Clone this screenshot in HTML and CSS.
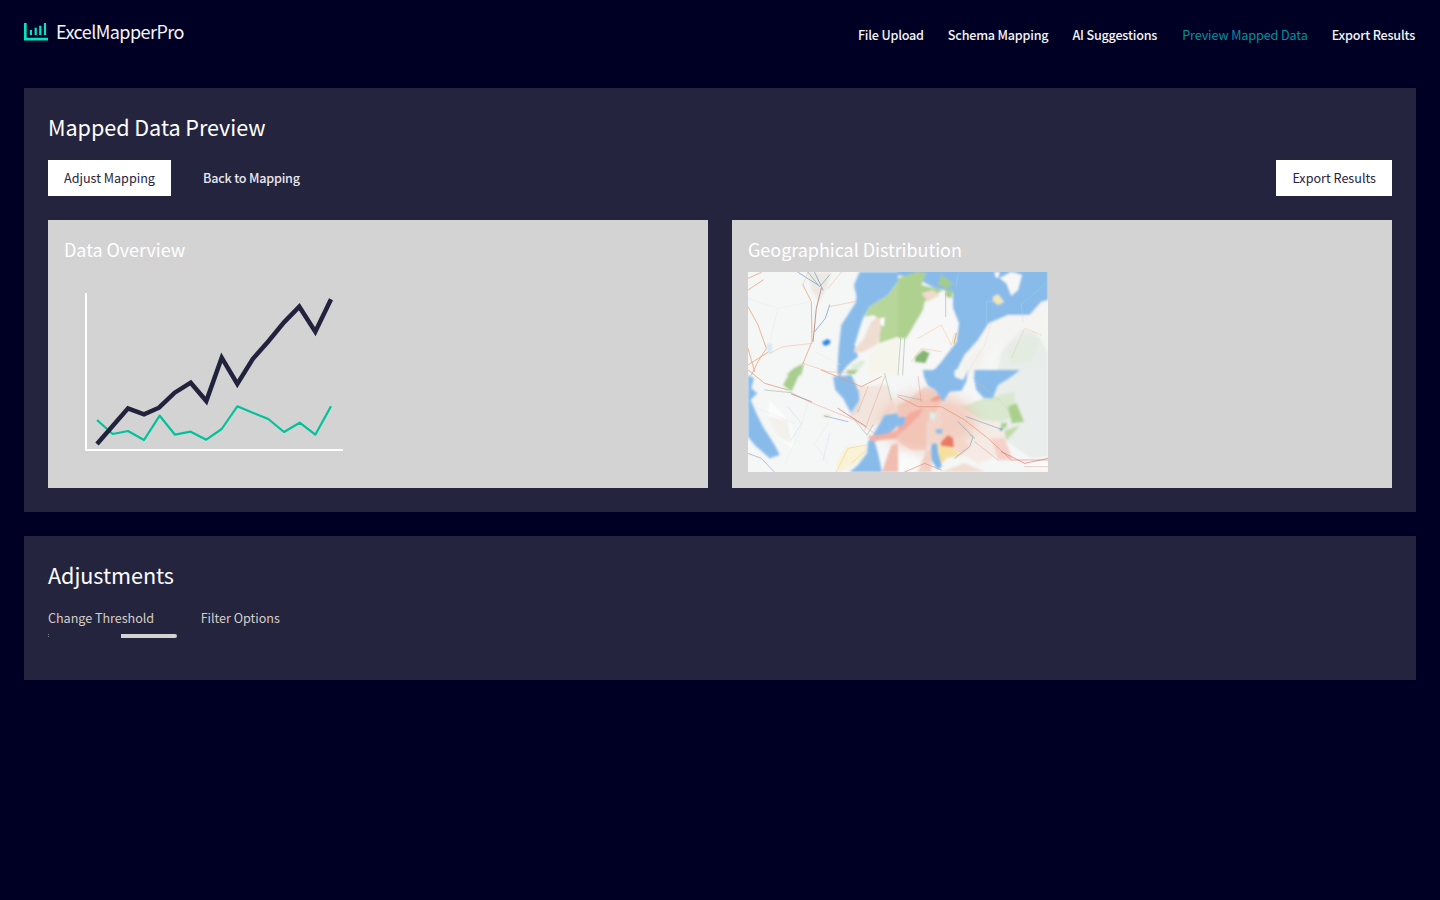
FILE: index.html
```html
<!DOCTYPE html>
<html lang="en">
<head>
<meta charset="utf-8">
<title>ExcelMapperPro</title>
<link rel="stylesheet" href="styles.css">
</head>
<body>
<header class="topbar">
  <a class="brand">
    <svg class="brand-icon" width="24" height="18" viewBox="0 0 24 18" aria-hidden="true">
      <path d="M1.250 0V16.200H24" fill="none" stroke="#00e5c4" stroke-width="2.800"/>
      <path d="M6.900 7v5M11.700 4.700v7.300M16.300 2.700v9.300M21 0v12" fill="none" stroke="#00e5c4" stroke-width="2.200"/>
    </svg>
    <span class="brand-name">ExcelMapperPro</span>
  </a>
  <nav class="nav">
    <a class="nav-link">File Upload</a>
    <a class="nav-link">Schema Mapping</a>
    <a class="nav-link">AI Suggestions</a>
    <a class="nav-link nav-active">Preview Mapped Data</a>
    <a class="nav-link">Export Results</a>
  </nav>
</header>
<main class="content">
  <section class="panel">
    <h2 class="panel-title">Mapped Data Preview</h2>
    <div class="toolbar">
      <button class="btn btn-white">Adjust Mapping</button>
      <button class="btn btn-text">Back to Mapping</button>
      <button class="btn btn-white btn-end">Export Results</button>
    </div>
    <div class="cards">
      <article class="card">
        <h3 class="card-title">Data Overview</h3>
        <svg class="figure" width="300" height="200" viewBox="64 272 300 200" aria-hidden="true">
          <defs>
            <filter id="raster" x="-5%" y="-5%" width="110%" height="110%"><feGaussianBlur stdDeviation="0.300"/></filter>
          </defs>
          <g filter="url(#raster)">
            <path d="M86 293V450H343" fill="none" stroke="#fff" stroke-width="2"/>
            <polyline fill="none" stroke="#00c29a" stroke-width="2.200" stroke-linejoin="round" points="97,420 112.700,434 128,431 144,440 159.700,415.700 175,434.700 190.700,431.700 206.300,439.700 221.700,429 237.300,406.300 252.700,412.700 268.300,419 284,432 299.700,422.700 315.300,434.700 331,406.300"/>
            <polyline fill="none" stroke="#24243e" stroke-width="4.500" points="97,444 128,408.300 144,414.300 159,407.700 174.700,392.700 190.700,382.700 206.300,401 221.700,357.700 237.300,384 252.700,359 268,341.700 284,322.300 299.300,306.700 315.300,331.700 331,299.300"/>
          </g>
        </svg>
      </article>
      <article class="card">
        <h3 class="card-title">Geographical Distribution</h3>
        <svg class="figure" width="300" height="200" viewBox="0 0 300 200" aria-hidden="true">
          <defs>
            <filter id="soft" x="-5%" y="-5%" width="110%" height="110%"><feGaussianBlur stdDeviation="0.900"/></filter>
            <filter id="softer" x="-5%" y="-5%" width="110%" height="110%"><feGaussianBlur stdDeviation="0.500"/></filter>
            <filter id="wash" x="-30%" y="-30%" width="160%" height="160%"><feGaussianBlur stdDeviation="6"/></filter>
            <clipPath id="mapclip"><rect width="300" height="200"/></clipPath>
          </defs>
          <g clip-path="url(#mapclip)">
          <rect width="300" height="200" fill="#f5f6f6"/>
          <g filter="url(#soft)">
            <g transform="translate(0,-7) scale(.33333)">
              <path fill="#89bbea" d="M335 20L450 20L450 50L420 90L365 125L345 160L335 190L320 240L330 275L300 300L280 325L275 340L268 320L272 250L280 180L322 115L326 95L318 60Z"/>
              <path fill="#f0ddd2" d="M395 150L370 170L345 225L320 250L318 262L345 262L385 240L402 200Z"/>
              <path fill="#b7d69a" d="M450 50L420 90L365 125L350 155L375 150L402 165L392 240L450 215Z"/>
              <path fill="#f6f5ec" d="M392 235L450 215L450 330L360 330L360 280Z"/>
              <path fill="#fff" d="M397 160L410 157L408 185L398 178Z"/>
              <path fill="#2a86e2" d="M222 232L238 222L248 228L244 238L230 243Z"/>
              <path fill="#d4e6f3" d="M55 238L72 236L72 256L62 268Z"/>
              <path fill="#dcecd8" d="M310 300L345 285L350 295L330 315L310 325Z"/>
              <path fill="#a8cd8f" d="M115 330L140 308L168 295L160 330Z"/>
              <path fill="#ebe3dc" opacity=".7" d="M180 22L250 22L235 70L215 110L190 75Z"/>
            </g>
            <g transform="translate(150,-7) scale(.33333)">
              <path fill="#89bbea" d="M0 0H450V110L420 130L395 150L330 150L270 180L240 230L200 270L170 330L95 330L130 285L175 230L183 175L165 130L165 80L110 70L75 50L0 30Z"/>
              <path fill="#f6f7f6" d="M0 50L65 60L110 85L142 80L160 125L180 175L175 230L130 290L95 330L0 330Z"/>
              <path fill="#aed18f" d="M0 40L30 30L60 20L85 25L70 60L110 70L135 75L80 110L75 135L25 220L0 220Z"/>
              <path fill="#a5cc88" d="M140 70L165 78L160 100L145 95Z"/>
              <path fill="#a5cc88" d="M130 30L145 40L165 58L145 68L120 60Z"/>
              <path fill="#f0dccc" d="M70 85L105 75L125 90L90 110Z"/>
              <path fill="#84b670" d="M52 275L75 255L95 265L82 295L50 290Z"/>
              <path fill="#f6f7f6" d="M305 40L340 20L372 30L360 75L340 92L325 55Z"/>
              <path fill="#f6f7f6" d="M290 20H305L302 38L292 36Z"/>
              <path fill="#f1e8b8" d="M285 95L300 88L318 110L300 120L285 108Z"/>
              <path fill="#f4f4f2" d="M170 330L200 270L240 225L272 175L330 150L395 150L430 110L450 105V330H390L345 320L295 328L285 300L310 235L290 240L265 295L270 330Z"/>
              <path fill="#e8ecea" d="M300 325L310 260L370 195L410 200L450 260V330H350Z"/>
              <path fill="#e2ece0" d="M330 260L380 210L430 220L400 290L340 300Z"/>
              <path fill="#f4f1ee" opacity=".8" d="M190 310L240 250L260 260L230 330H190Z"/>
            </g>
            <g transform="translate(0,98) scale(.33333)">
              <path fill="#89bbea" d="M255 20L310 15L335 70L335 125L312 135L285 85L262 60Z"/>
              <path fill="#89bbea" d="M0 15L18 25L10 55L28 70L8 90L25 130L45 170L80 225L95 255L65 265L20 225L0 200Z"/>
              <path fill="#f9f2d6" d="M295 230L358 225L352 260L305 290L270 306L265 280Z"/>
              <path fill="#f1e2d8" opacity=".85" d="M330 50L420 45L440 110L400 150L370 175L330 155L300 140L335 90Z"/>
              <path fill="#a8cd8f" d="M105 45L130 0H160L130 65Z"/>
              <path fill="#fbfcfc" d="M65 90L130 160L140 240L90 205L60 130Z"/>
              <path fill="#f0ece6" opacity=".7" d="M60 140L120 150L130 220L90 200Z"/>
              <path fill="#e6e2a8" d="M225 135L245 135L245 142L228 142Z"/>
              <path fill="#a8cd8f" d="M295 0L330 0L320 12L300 12Z"/>
            </g>
            <g transform="translate(150,98) scale(.33333)">
              <path fill="#e9edeb" d="M290 35L350 0H450V260L400 265L320 210L300 150Z"/>
              <path fill="#f3d5ca" d="M0 105L30 90L80 50L115 60L135 90L110 130L85 160L85 240L40 240L0 215Z"/>
              <path fill="#f5ebe4" d="M130 100L250 105L320 180L325 250L240 280L180 245L130 205Z"/>
              <path fill="#d9e8cf" d="M190 110L260 85L330 70L350 65L350 140L310 155L250 150Z"/>
              <path fill="#fafbfb" opacity=".75" d="M0 245L40 240L75 290L30 306H0Z"/>
              <path fill="#f3dcd2" d="M130 306L200 280L260 306Z"/>
              <path fill="#f5d2c9" d="M280 205L320 205L345 270L300 270Z"/>
              <path fill="#fbfcfc" d="M385 270L450 265V295L395 295Z"/>
            </g>
          </g>
          <ellipse class="map-wash" cx="180" cy="150" rx="48" ry="30" fill="#f0b9a8" filter="url(#wash)"/>
          <g filter="url(#soft)">
            <g transform="translate(0,98) scale(.33333)">
              <path fill="#89bbea" d="M410 135L450 130V165L415 200L380 215L390 250L402 306H305L330 285L357 250L360 215L375 195Z"/>
              <path fill="#f3b1a3" d="M358 198L400 195L450 180V205L400 210L375 215Z"/>
              <path fill="#f1bdb0" d="M430 225L450 220V306H402Z"/>
            </g>
            <g transform="translate(150,98) scale(.33333)">
              <path fill="#89bbea" d="M75 0H210L205 35L190 62L155 65L135 95L112 60L90 48L78 20Z"/>
              <path fill="#89bbea" d="M230 0H365L340 20L300 45L285 85L258 85L235 60L228 25Z"/>
              <path fill="#f3f4f2" d="M170 0H210L195 30L170 20Z"/>
              <path fill="#f4ab9b" d="M0 170L35 130L75 115L65 135L25 175L0 195Z"/>
              <path fill="#eaa28f" d="M95 90L120 75L132 88L110 95Z"/>
              <path fill="#89bbea" d="M0 142L22 140L20 165L0 172Z"/>
              <path fill="#a9d08c" d="M330 110L355 100L378 155L342 160Z"/>
              <path fill="#a9d08c" d="M310 160L328 158L322 175L310 175Z"/>
              <path fill="#bddca6" d="M320 182L365 167L340 195L325 210Z"/>
              <circle cx="310" cy="178" r="4" fill="#3d9bbb"/>
              <path fill="#eb7a64" d="M130 215L150 196L165 205L168 232L128 228Z"/>
              <path fill="#f5e09f" d="M120 225L165 235L190 258L150 262L125 285Z"/>
              <path fill="#f6d6c8" d="M170 205L200 210L215 230L190 255L168 235Z"/>
              <path fill="#7fb7e5" d="M103 220L118 222L120 245L132 290L118 298L100 270L98 240Z"/>
              <path fill="#8fbee5" d="M112 178L135 178L130 192L115 190Z"/>
              <path fill="#f3d0c4" d="M85 240H100V306H60Z"/>
              <path fill="#dcf0e8" d="M95 125L115 130L110 150L95 145Z"/>
            </g>
          </g>
          <g filter="url(#softer)" fill="none" stroke-linejoin="round" stroke-linecap="round" opacity=".9">
            <g transform="translate(0,-7) scale(.33333)">
              <path stroke="#e8a077" stroke-width="2.500" d="M0 40L40 22M0 75L45 45M0 125L30 180L55 250L30 290L10 330M0 250L20 320M60 262L0 300M165 60L190 110L192 230L165 295"/>
              <path stroke="#b58a82" stroke-width="3" d="M220 70L205 130L195 230"/>
              <path stroke="#5a88c2" stroke-width="2" d="M245 120L232 160L200 200M150 22L210 60M200 22L225 75"/>
              <path stroke="#5aa8a0" stroke-width="2" d="M180 22L215 65L245 30"/>
              <path stroke="#ecb390" stroke-width="1.500" d="M280 22L240 70M245 125L320 110M192 235L105 245L65 265M165 295L240 320L320 325M180 22L165 60"/>
              <path stroke="#e7e9ea" stroke-width="1.500" d="M0 100L90 130L190 110M90 130L65 230M200 260L280 300"/>
            </g>
            <g transform="translate(150,-7) scale(.33333)">
              <path stroke="#8aa37d" stroke-width="1.500" d="M143 85L143 155M8 220L0 330M20 220L14 330"/>
              <path stroke="#f2c480" stroke-width="1.500" d="M170 205L160 240L130 180L60 220M40 290L70 250L130 260"/>
              <path stroke="#f0a648" stroke-width="3" d="M175 205L168 235"/>
              <path stroke="#78dcd9" stroke-width="2" d="M450 50L370 118"/>
              <path stroke="#bfd7ef" stroke-width="1" d="M265 110L265 180M265 110L300 110M370 118L375 170M180 25L175 65"/>
              <path stroke="#eec891" stroke-width="1.500" d="M340 280L380 190L430 210"/>
              <path stroke="#eccfc5" stroke-width="1" d="M210 320L260 240L280 175"/>
            </g>
            <g transform="translate(0,98) scale(.33333)">
              <path stroke="#e39a72" stroke-width="2.500" d="M0 0L50 40L120 60M220 0L340 50L400 20"/>
              <path stroke="#d65b58" stroke-width="2" d="M130 72L190 95M270 115L355 170"/>
              <path stroke="#7ba58a" stroke-width="1.500" d="M50 60L130 68L190 98M320 150L357 195L375 165"/>
              <path stroke="#5681c0" stroke-width="1.500" d="M0 250L40 265L78 305M230 138L300 155"/>
              <path stroke="#e79c8a" stroke-width="1.500" d="M190 98L320 150L380 190L420 190M360 50L330 125M410 20L380 100L350 180"/>
              <path stroke="#b7d6ef" stroke-width="1.200" d="M120 110L160 160L130 210M245 190L225 270"/>
              <path stroke="#ebcd70" stroke-width="1.500" d="M357 225L300 235L265 306M355 240L310 280"/>
              <path stroke="#e6e8e9" stroke-width="1.200" d="M180 100L150 200L110 280M240 160L200 220L240 280M20 110L140 160"/>
              <path stroke="#78bd85" stroke-width="1.500" d="M430 90L410 10"/>
            </g>
            <g transform="translate(150,98) scale(.33333)">
              <path stroke="#e2856f" stroke-width="2" d="M0 80L60 110L130 110L200 150L270 205L340 270L450 270M20 306L80 280L130 300"/>
              <path stroke="#d9625e" stroke-width="2" d="M310 245L380 280L450 265"/>
              <path stroke="#e8918a" stroke-width="1.500" d="M380 290L450 290M230 215L300 270M60 20L70 95"/>
              <path stroke="#4b86bb" stroke-width="1.500" d="M170 265L215 230L225 200L180 155M205 140L310 178"/>
              <path stroke="#60b8a0" stroke-width="1.500" d="M0 75L70 90M215 195L230 205"/>
              <path stroke="#d9c79f" stroke-width="1" d="M220 20L300 90M300 85L340 130"/>
            </g>
          </g>
          </g>
        </svg>
      </article>
    </div>
  </section>
  <section class="panel">
    <h2 class="panel-title">Adjustments</h2>
    <div class="tabs">
      <span class="tab">Change Threshold</span>
      <span class="tab">Filter Options</span>
    </div>
    <div class="indicator-track">
      <span class="indicator-dot"></span>
      <span class="indicator"></span>
    </div>
  </section>
</main>
</body>
</html>
```

FILE: styles.css
```css
* {
  box-sizing: border-box;
}

html,
body {
  margin: 0;
  min-height: 100%;
}

body {
  min-height: 900px;
  background: #000024;
  color: #fff;
  font-family: "Noto Sans CJK SC", "Noto Sans", sans-serif;
  font-size: 12.6px;
}

.topbar {
  display: flex;
  justify-content: space-between;
  align-items: flex-start;
  height: 64px;
  padding: 0 25px 0 24px;
}

.brand {
  display: flex;
  align-items: center;
  gap: 8px;
  height: 64px;
}

.brand-icon {
  display: block;
}

.brand-name {
  margin-bottom: 2px;
  font-size: 18px;
  line-height: 28px;
  letter-spacing: -0.55px;
  color: #f6f6fa;
}

.nav {
  display: flex;
  gap: 24px;
  padding-top: 25px;
}

.nav-link {
  font-size: 12.6px;
  line-height: 20px;
  font-weight: 500;
  letter-spacing: -0.2px;
  color: #f4f4f8;
}

.nav-active {
  margin-left: 1px;
  font-weight: 400;
  letter-spacing: -0.1px;
  color: #00909c;
}

.content {
  display: flex;
  flex-direction: column;
  gap: 24px;
  padding: 24px;
}

.panel {
  background: #24243e;
  padding: 24px;
}

.panel-title {
  margin: 0 0 18px;
  font-size: 21.6px;
  line-height: 30px;
  font-weight: 400;
  letter-spacing: -0.05px;
  color: #fff;
}

.toolbar {
  display: flex;
  gap: 16px;
}

.btn {
  height: 36px;
  padding: 0 16px 2px;
  border: 0;
  font-family: inherit;
  font-size: 12.6px;
}

.btn-white {
  background: #fff;
  color: #24243e;
}

.btn-text {
  background: transparent;
  color: #e8e8ee;
  font-weight: 500;
  letter-spacing: -0.2px;
}

.btn-end {
  margin-left: auto;
}

.cards {
  display: grid;
  grid-template-columns: 1fr 1fr;
  gap: 24px;
  margin-top: 24px;
}

.card {
  background: #d3d3d3;
  padding: 16px;
  height: 268px;
}

.card-title {
  margin: 0 0 10px;
  font-size: 18px;
  line-height: 26px;
  font-weight: 400;
  letter-spacing: -0.05px;
  color: #fff;
}

.figure {
  display: block;
}

.map-wash {
  opacity: 0.55;
}

.tabs {
  display: flex;
  gap: 46.5px;
}

.tab {
  font-size: 12.6px;
  line-height: 20px;
  letter-spacing: -0.03px;
  color: #d6cfc8;
}

.indicator-track {
  display: flex;
  align-items: center;
  height: 4px;
  margin-top: 6px;
  margin-bottom: 18px;
}

.indicator-dot {
  width: 1px;
  height: 4px;
  background: repeating-linear-gradient(#77778a 0 1px, transparent 1px 2px);
}

.indicator {
  width: 56px;
  height: 4px;
  margin-left: 72px;
  border-radius: 0 2px 2px 0;
  background: #d3d3d3;
}
```
